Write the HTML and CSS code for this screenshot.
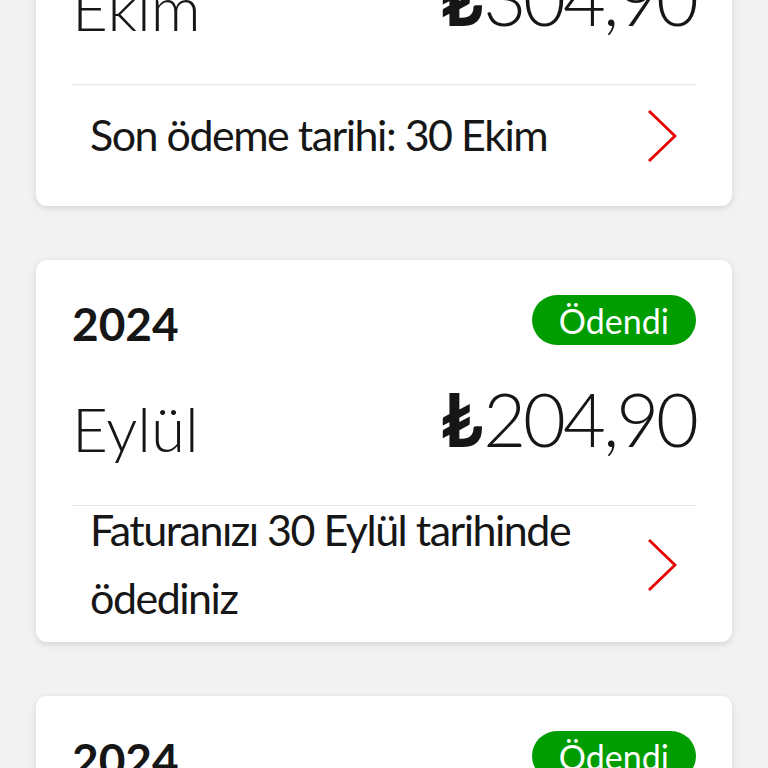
FILE: index.html
```html
<!DOCTYPE html>
<html lang="tr">
<head>
  <meta charset="UTF-8">
  <title>Faturalarım</title>
  <link rel="stylesheet" href="styles.css">
</head>
<body>

<!-- fatura listesi -->
<div class="bills">

  <div class="bill">
    <div class="bill-head">
      <span class="year">2024</span>
    </div>
    <div class="bill-amount">
      <span class="month">Ekim</span>
      <span class="price"><span class="lira">₺</span>304,90</span>
    </div>
    <div class="bill-foot">
      <span class="bill-note">Son ödeme tarihi: 30 Ekim</span>
      <svg class="chevron" viewBox="0 0 30 54"><polyline points="2,2 28,27 2,52"/></svg>
    </div>
  </div>

  <div class="bill">
    <div class="bill-head">
      <span class="year">2024</span>
      <span class="badge">Ödendi</span>
    </div>
    <div class="bill-amount">
      <span class="month">Eylül</span>
      <span class="price"><span class="lira">₺</span>204,90</span>
    </div>
    <div class="bill-foot">
      <span class="bill-note">Faturanızı 30 Eylül tarihinde ödediniz</span>
      <svg class="chevron" viewBox="0 0 30 54"><polyline points="2,2 28,27 2,52"/></svg>
    </div>
  </div>

  <div class="bill">
    <div class="bill-head">
      <span class="year">2024</span>
      <span class="badge">Ödendi</span>
    </div>
    <div class="bill-amount">
      <span class="month">Ağustos</span>
      <span class="price"><span class="lira">₺</span>204,90</span>
    </div>
    <div class="bill-foot">
      <span class="bill-note">Faturanızı 30 Ağustos tarihinde ödediniz</span>
      <svg class="chevron" viewBox="0 0 30 54"><polyline points="2,2 28,27 2,52"/></svg>
    </div>
  </div>

</div>

</body>
</html>
```

FILE: styles.css
```css
/* genel */
body {
  margin: 0;
  background: #f2f2f2;
  font-family: 'Lato', 'Noto Sans', sans-serif;
  color: #161616;
}

/* liste kaydırılmış halde */
.bills {
  display: flex;
  flex-direction: column;
  gap: 54px;
  padding: 0 36px;
  margin-top: -161px;
}

.bill {
  background: #fff;
  border-radius: 11px;
  box-shadow: 0 2px 7px rgba(0, 0, 0, 0.13);
  padding: 35px 36px 0;
}

.bill-head {
  display: flex;
  justify-content: space-between;
  align-items: center;
  height: 50px;
}
.year {
  margin-top: 6px;
  font-size: 46px;
  font-weight: 700;
}
.badge {
  display: flex;
  align-items: center;
  height: 50px;
  padding: 0 27px;
  border-radius: 25px;
  background: #009d00;
  color: #fff;
  font-size: 34px;
}

.bill-amount {
  display: flex;
  justify-content: space-between;
  align-items: flex-end;
  height: 74px;
  margin: 46px 0 40px;
  font-weight: 300;
}
.month {
  font-size: 62px;
  line-height: 74px;
}
.price {
  margin-bottom: 18px;
  font-size: 74px;
  line-height: 56px;
  letter-spacing: -3px;
}
.lira {
  font-weight: 700;
  letter-spacing: 0;
}

.bill-foot {
  display: flex;
  justify-content: space-between;
  align-items: center;
  box-sizing: border-box;
  min-height: 122px;
  padding: 0 19px 11px 18px;
  border-top: 1px solid #e6e6e6;
}
.bill-note {
  margin-top: -10px;
  max-width: 500px;
  font-size: 43px;
  line-height: 67.5px;
  letter-spacing: -1.5px;
}
.chevron {
  flex: none;
  width: 30px;
  height: 54px;
  margin-bottom: 8px;
}
.chevron polyline {
  fill: none;
  stroke: #e60000;
  stroke-width: 2.8;
}
```
